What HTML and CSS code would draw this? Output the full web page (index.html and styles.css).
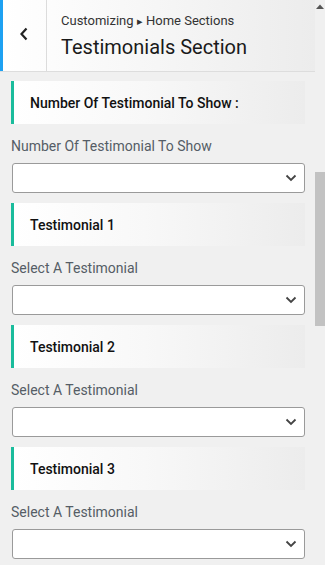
FILE: index.html
```html
<!DOCTYPE html>
<html>
<head>
<meta charset="utf-8">
<link rel="stylesheet" href="styles.css">
</head>
<body>
<div class="frame">
  <div class="panel">
    <header class="head">
      <button class="back" aria-label="Back">
        <svg width="12" height="16" viewBox="0 0 12 16"><path d="M8.5 2.5 L3.5 8 L8.5 13.5" fill="none" stroke="#222" stroke-width="2.2"/></svg>
      </button>
      <div class="titles">
        <div class="crumb">Customizing <span class="tri">&#9656;</span> Home Sections</div>
        <h1 class="title">Testimonials Section</h1>
      </div>
    </header>
    <div class="body">
      <div class="block">
        <div class="heading">Number Of Testimonial To Show :</div>
        <div class="label">Number Of Testimonial To Show</div>
        <div class="select"><svg class="chev" width="12" height="8" viewBox="0 0 12 8"><path d="M1.5 1.5 L6 6 L10.5 1.5" fill="none" stroke="#444" stroke-width="1.8"/></svg></div>
      </div>
      <div class="block">
        <div class="heading">Testimonial 1</div>
        <div class="label">Select A Testimonial</div>
        <div class="select"><svg class="chev" width="12" height="8" viewBox="0 0 12 8"><path d="M1.5 1.5 L6 6 L10.5 1.5" fill="none" stroke="#444" stroke-width="1.8"/></svg></div>
      </div>
      <div class="block">
        <div class="heading">Testimonial 2</div>
        <div class="label">Select A Testimonial</div>
        <div class="select"><svg class="chev" width="12" height="8" viewBox="0 0 12 8"><path d="M1.5 1.5 L6 6 L10.5 1.5" fill="none" stroke="#444" stroke-width="1.8"/></svg></div>
      </div>
      <div class="block">
        <div class="heading">Testimonial 3</div>
        <div class="label">Select A Testimonial</div>
        <div class="select"><svg class="chev" width="12" height="8" viewBox="0 0 12 8"><path d="M1.5 1.5 L6 6 L10.5 1.5" fill="none" stroke="#444" stroke-width="1.8"/></svg></div>
      </div>
    </div>
  </div>
  <div class="scrollbar">
    <svg class="up" width="8" height="5" viewBox="0 0 8 5"><path d="M0 5 L4 0.5 L8 5 Z" fill="#555"/></svg>
    <div class="thumb"></div>
  </div>
</div>
</body>
</html>
```
FILE: styles.css
```css
* { box-sizing: border-box; }
html, body { margin: 0; padding: 0; }
body {
  width: 325px;
  height: 565px;
  overflow: hidden;
  background: #f0f0f0;
  font-family: Roboto, "Liberation Sans", sans-serif;
}
.frame {
  display: flex;
  height: 565px;
}
.panel {
  width: 315px;
  flex: none;
}
.head {
  display: flex;
  height: 72px;
  background: linear-gradient(90deg, #ffffff 0%, #f6f6f6 50%, #ececec 100%);
  border-bottom: 1px solid #dddddd;
}
.back {
  width: 47px;
  height: 71px;
  flex: none;
  border: none;
  border-left: 3px solid #1da1f2;
  border-right: 1px solid #dcdcdc;
  background: transparent;
  padding: 0 2px 4px 0;
  display: flex;
  align-items: center;
  justify-content: center;
}
.titles {
  padding: 13px 0 0 14px;
}
.crumb {
  font-size: 13px;
  color: #333;
  line-height: 16px;
}
.tri {
  font-size: 11px;
}
.title {
  margin: 4px 0 0 0;
  font-size: 20px;
  font-weight: 400;
  color: #1a1a1a;
  line-height: 26px;
}
.body {
  padding: 9px 10px 0 11px;
}
.block {
  margin-bottom: 10px;
}
.heading {
  height: 43px;
  border-left: 3px solid #1abc9c;
  background: linear-gradient(90deg, #ffffff 0%, #f8f8f8 45%, #ececec 100%);
  padding-left: 16px;
  display: flex;
  align-items: center;
  font-size: 14px;
  font-weight: 500;
  color: #111;
}
.label {
  margin-top: 13px;
  font-size: 14px;
  color: #555d66;
  line-height: 18px;
}
.select {
  margin-top: 8px;
  margin-left: 1px;
  height: 30px;
  background: #fff;
  border: 1px solid #9a9a9a;
  border-radius: 3px;
  display: flex;
  align-items: center;
  justify-content: flex-end;
  padding-right: 7px;
}
.scrollbar {
  width: 10px;
  flex: none;
  display: flex;
  flex-direction: column;
  align-items: center;
}
.up {
  margin-top: 4px;
}
.thumb {
  margin-top: 163px;
  width: 10px;
  height: 154px;
  background: #c2c2c2;
}
```
